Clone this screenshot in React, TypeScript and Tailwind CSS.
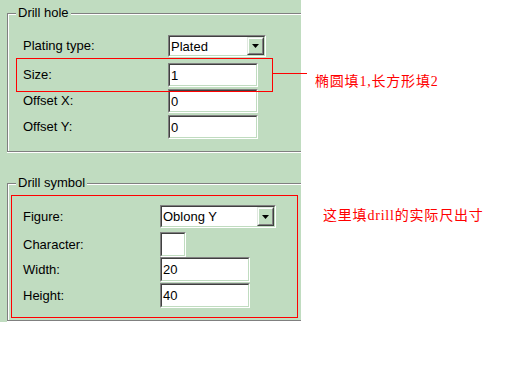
import type { ReactNode } from 'react';

const Sunken = ({ className, children }: { className: string; children?: ReactNode }) => (
    <div className={`border border-t-[#808080] border-l-[#808080] border-r-white border-b-white ${className}`}>
        <div className="flex h-full items-center border border-t-[#404040] border-l-[#404040] border-r-[#c0dcc0] border-b-[#c0dcc0] bg-white pl-[1px] text-[13px] leading-none text-black">
            {children}
        </div>
    </div>
);

const Combo = ({ value, className }: { value: string; className: string }) => (
    <Sunken className={className}>
        <span className="flex-1">{value}</span>
        <div className="h-full w-[17px] border border-t-[#dfe9df] border-l-[#dfe9df] border-r-[#404040] border-b-[#404040]">
            <div className="flex h-full items-center justify-center border border-t-white border-l-white border-r-[#808080] border-b-[#808080] bg-[#c0dcc0]">
                <svg width="7" height="4" viewBox="0 0 7 4">
                    <path d="M0 0h7L3.5 4z" fill="#000" />
                </svg>
            </div>
        </div>
    </Sunken>
);

const Group = ({ title, className, children }: { title: string; className: string; children: ReactNode }) => (
    <div className={`relative border-t border-l border-b border-[#808080] shadow-[inset_1px_1px_0_#fff,0_1px_0_#fff] ${className}`}>
        <span className="absolute left-[8px] -top-[9px] bg-[#c0dcc0] px-[2px] text-[13px] leading-[15px] text-black">{title}</span>
        {children}
    </div>
);

const App = () => {
    return (
        <div className="flex h-[384px] w-[512px] bg-white" style={{ fontFamily: '"Liberation Sans", Arial, sans-serif' }}>
            {/* dialog panel */}
            <div className="flex h-[322px] w-[301px] shrink-0 flex-col bg-[#c0dcc0] pl-[7px]">
                <Group title="Drill hole" className="mt-[13px] h-[139px]">
                    <div className="mt-[21px] flex h-[22px] items-center pl-[15px]">
                        <span className="w-[145px] text-[13px]">Plating type:</span>
                        <Combo value="Plated" className="h-[22px] w-[98px]" />
                    </div>
                    <div className="relative mt-[6px] flex h-[24px] items-center pl-[15px]">
                        <span className="w-[145px] text-[13px]">Size:</span>
                        <Sunken className="h-[24px] w-[90px]">1</Sunken>
                        <div className="absolute left-[8px] -top-[5px] h-[34px] w-[257px] border border-[#ff0000]" />
                        <div className="absolute left-[264px] top-[10px] h-px w-[35px] bg-[#ff0000]" />
                    </div>
                    <div className="mt-[2px] flex h-[24px] items-center pl-[15px]">
                        <span className="w-[145px] text-[13px]">Offset X:</span>
                        <Sunken className="h-[24px] w-[90px]">0</Sunken>
                    </div>
                    <div className="mt-[2px] flex h-[24px] items-center pl-[15px]">
                        <span className="w-[145px] text-[13px]">Offset Y:</span>
                        <Sunken className="h-[24px] w-[90px]">0</Sunken>
                    </div>
                </Group>

                <Group title="Drill symbol" className="mt-[31px] h-[138px]">
                    <div className="ml-[3px] mt-[11px] h-[123px] w-[287px] border border-[#ff0000] pl-[11px] pt-[9px]">
                        <div className="flex h-[23px] items-center">
                            <span className="w-[137px] text-[13px]">Figure:</span>
                            <Combo value="Oblong Y" className="h-[23px] w-[116px]" />
                        </div>
                        <div className="mt-[4px] flex h-[25px] items-center">
                            <span className="w-[137px] text-[13px]">Character:</span>
                            <Sunken className="h-[25px] w-[26px]" />
                        </div>
                        <div className="flex h-[25px] items-center">
                            <span className="w-[137px] text-[13px]">Width:</span>
                            <Sunken className="h-[25px] w-[90px]">20</Sunken>
                        </div>
                        <div className="mt-[1px] flex h-[25px] items-center">
                            <span className="w-[137px] text-[13px]">Height:</span>
                            <Sunken className="h-[25px] w-[90px]">40</Sunken>
                        </div>
                    </div>
                </Group>
            </div>

            {/* annotations */}
            <div
                className="flex flex-col pl-[14px] pt-[74px] text-[14px] leading-[16px] tracking-[0.8px] text-[#ff0000]"
                style={{ fontFamily: '"Liberation Serif", "Noto Sans CJK SC", serif' }}
            >
                <span>椭圆填1,长方形填2</span>
                <span className="ml-[8px] mt-[118px]">这里填drill的实际尺出寸</span>
            </div>
        </div>
    );
};

export default App;
